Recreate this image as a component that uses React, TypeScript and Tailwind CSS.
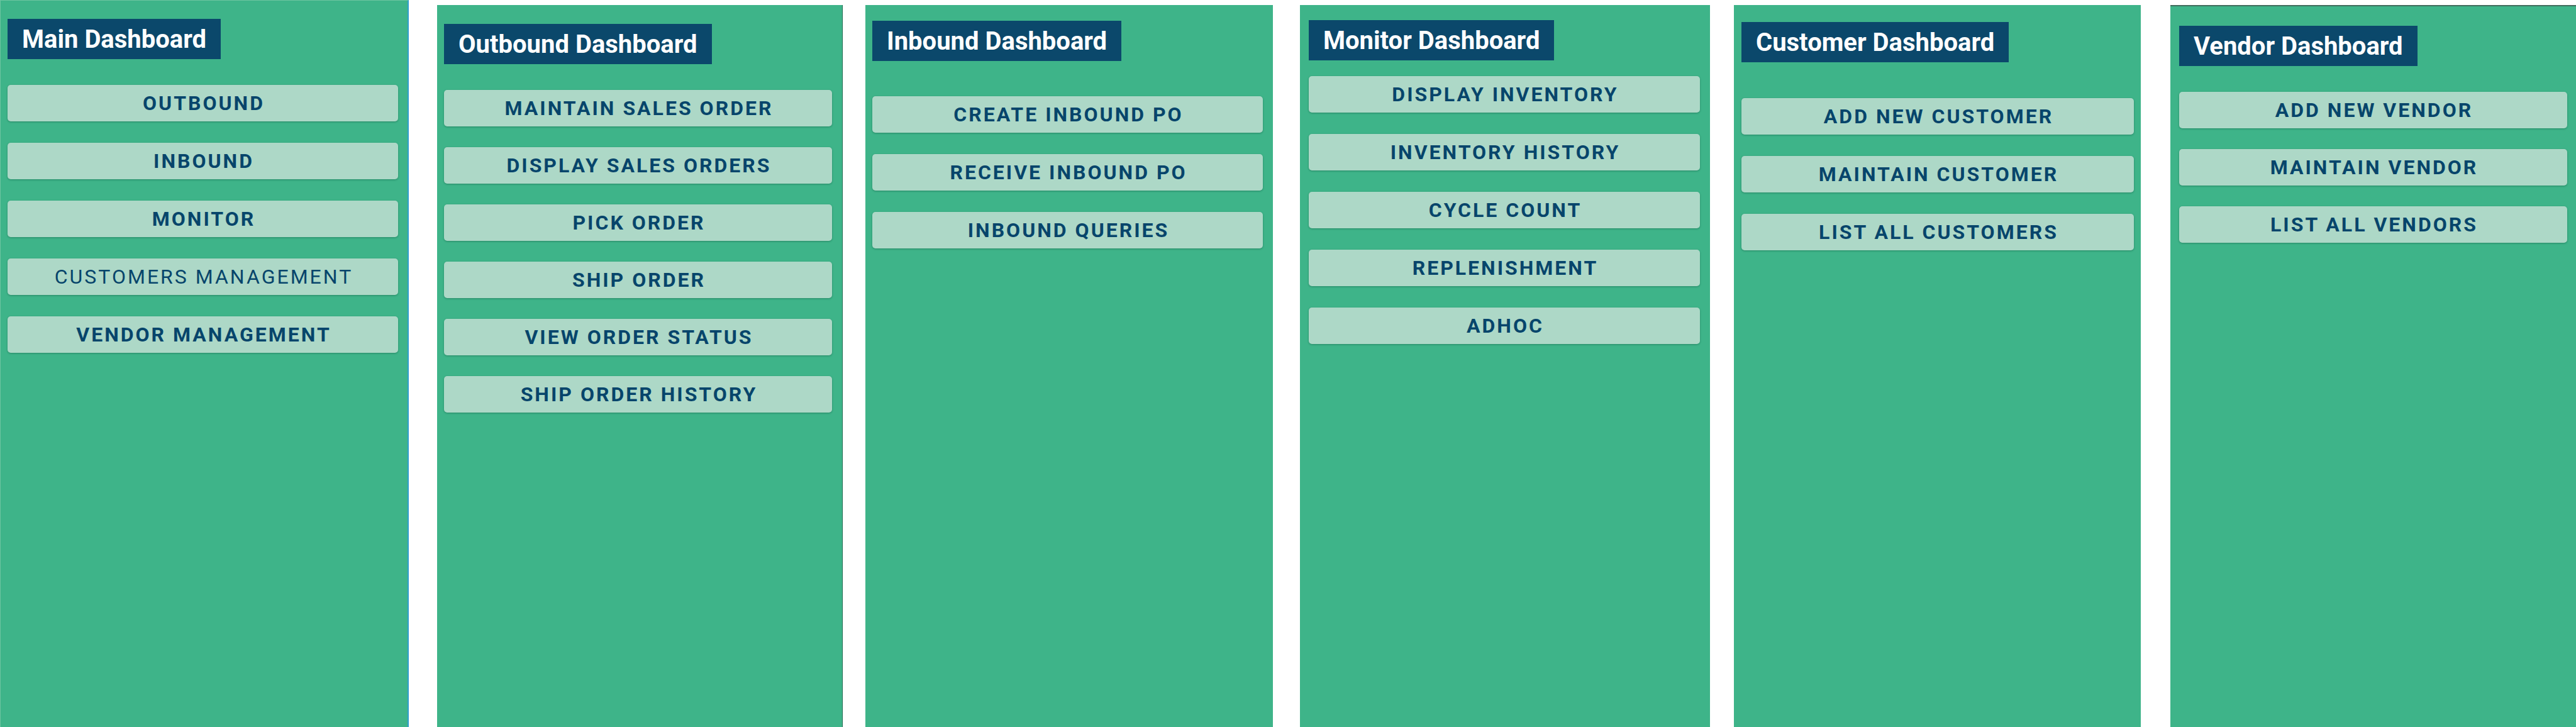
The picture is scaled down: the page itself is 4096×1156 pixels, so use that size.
type Action = { label: string; regular?: boolean };

type Panel = {
  title: string;
  actions: Action[];
  frame: string;
  heading: string;
  list: string;
};

const panels: Panel[] = [
  {
    title: "Main Dashboard",
    actions: [
      { label: "Outbound" },
      { label: "Inbound" },
      { label: "Monitor" },
      { label: "Customers Management", regular: true },
      { label: "Vendor Management" },
    ],
    frame:
      "border-t border-l border-r-2 border-t-[#6cc4a0] border-l-[#6cc4a0] border-r-[#2f9fd0] pt-[29px] pl-[11px] pr-[15px]",
    heading: "mb-[41px]",
    list: "gap-[34px]",
  },
  {
    title: "Outbound Dashboard",
    actions: [
      { label: "Maintain Sales Order" },
      { label: "Display Sales Orders" },
      { label: "Pick Order" },
      { label: "Ship Order" },
      { label: "View Order Status" },
      { label: "Ship Order History" },
    ],
    frame: "mt-2 ml-[45px] border-r border-r-[#1f6b50] pt-[30px] pl-[11px] pr-[16px]",
    heading: "mb-[41px]",
    list: "gap-[33px]",
  },
  {
    title: "Inbound Dashboard",
    actions: [
      { label: "Create Inbound PO" },
      { label: "Receive Inbound PO" },
      { label: "Inbound Queries" },
    ],
    frame: "mt-2 ml-9 pt-[25px] pl-[11px] pr-[16px]",
    heading: "mb-[56px]",
    list: "gap-[34px]",
  },
  {
    title: "Monitor Dashboard",
    actions: [
      { label: "Display Inventory" },
      { label: "Inventory History" },
      { label: "Cycle Count" },
      { label: "Replenishment" },
      { label: "Adhoc" },
    ],
    frame: "mt-2 ml-[43px] pt-[24px] pl-[14px] pr-[16px]",
    heading: "mb-[25px]",
    list: "gap-[34px]",
  },
  {
    title: "Customer Dashboard",
    actions: [
      { label: "Add New Customer" },
      { label: "Maintain Customer" },
      { label: "List All Customers" },
    ],
    frame: "mt-2 ml-[38px] pt-[27px] pl-[12px] pr-[11px]",
    heading: "mb-[57px]",
    list: "gap-[34px]",
  },
  {
    title: "Vendor Dashboard",
    actions: [
      { label: "Add New Vendor" },
      { label: "Maintain Vendor" },
      { label: "List All Vendors" },
    ],
    frame: "mt-2 ml-[47px] border-t-2 border-t-[#3f6b5c] pt-[31px] pl-[14px] pr-[14px]",
    heading: "mb-[41px]",
    list: "gap-[33px]",
  },
];

function ActionButton({ label, regular }: Action) {
  return (
    <button
      type="button"
      className={`h-[58px] w-full rounded-[5px] bg-[#add8c7] pl-[3px] text-center text-[32px] leading-[58px] tracking-[3px] text-[#07456b] uppercase shadow-[0_1px_3px_rgba(0,70,50,0.4)] ${
        regular ? "font-normal" : "font-bold"
      }`}
    >
      {label}
    </button>
  );
}

function DashboardPanel({ title, actions, frame, heading, list }: Panel) {
  return (
    <section className={`flex min-w-0 flex-col items-start bg-[#3eb489] ${frame}`}>
      <h2
        className={`bg-[#0b486b] px-[23px] pt-[2px] text-[40px] leading-[62px] font-bold whitespace-nowrap text-white ${heading}`}
      >
        {title}
      </h2>
      <nav aria-label={title} className={`flex w-full flex-col ${list}`}>
        {actions.map((action) => (
          <ActionButton key={action.label} {...action} />
        ))}
      </nav>
    </section>
  );
}

export default function App() {
  return (
    <main className="grid min-h-screen grid-cols-[650fr_690fr_684fr_695fr_685fr_692fr] bg-white font-['Roboto',sans-serif]">
      {panels.map((panel) => (
        <DashboardPanel key={panel.title} {...panel} />
      ))}
    </main>
  );
}
